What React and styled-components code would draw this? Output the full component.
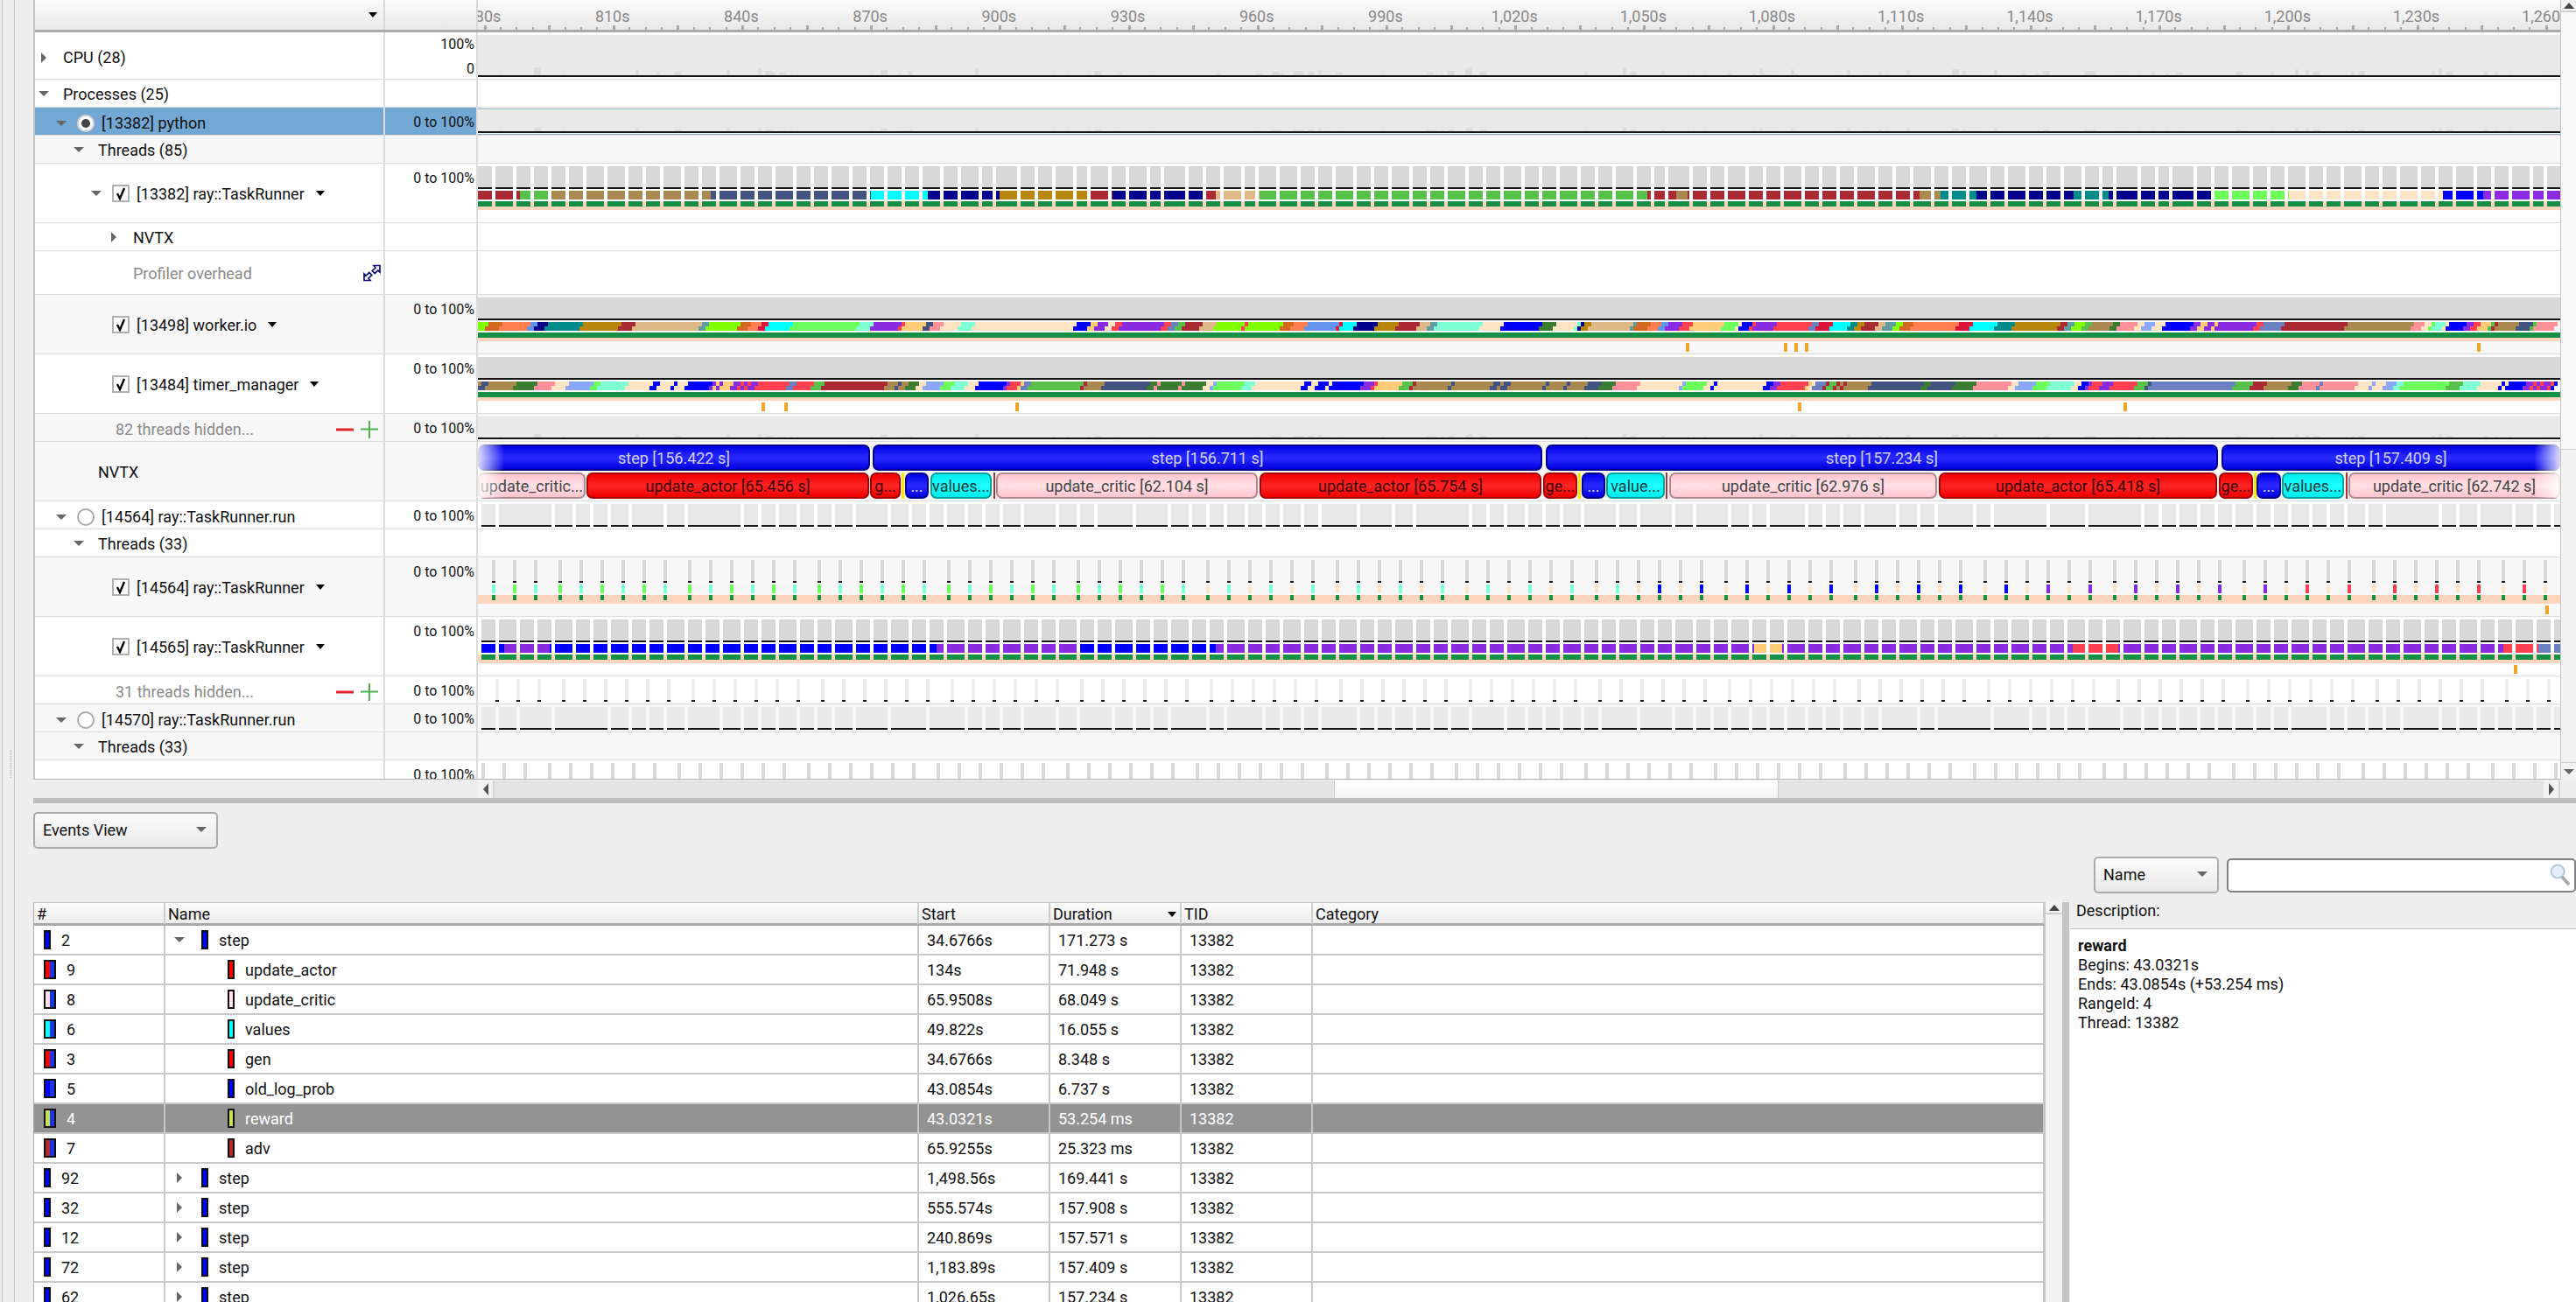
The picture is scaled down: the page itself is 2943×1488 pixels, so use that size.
import React from 'react';
import styled, { createGlobalStyle } from 'styled-components';

const GRAPH_W = 2379;
const ORIGIN = 546;

const GlobalStyle = createGlobalStyle`
    html, body {
        margin: 0;
        padding: 0;
        background: #eeeeee;
    }
    body {
        font-family: Roboto, "Liberation Sans", sans-serif;
        font-size: 18px;
        color: #111;
    }
    * {
        box-sizing: border-box;
    }
`

const COLORS = {
    ch: '#7fff00', ck: '#d2691e', co: '#ff7f50', cf: '#6495ed', nv: '#00008b', te: '#008b8b',
    go: '#b8860b', fb: '#aa2a33', bw: '#deb887', ca: '#5f9ea0', cr: '#dc143c', cy: '#00ffff',
    li: '#6aff5a', aq: '#7fffd4', pu: '#8a2be2', rd: '#ff4050', pe: '#ffcc77', pk: '#ff8f98',
    bi: '#ffe4c4', bl: '#0000ff', sb: '#6a80c0', gr: '#57c14a', dg: '#3a7d30', ta: '#a98950',
    sl: '#445480', lb: '#8aa8f8',
}

// thread colour runs, read off the reference: "colour:endX" in crop coordinates
const WORKER_A = 'ch:24 ck:44 co:85 cf:97 nv:112 te:165 go:222 fb:243 bw:342 ca:353 ch:400 ck:416 co:431 cr:441 cy:478 li:578 aq:598 pu:640 rd:645 pe:677 sl:687 pk:703 bi:729 aq:750 bi:902 bl:925 pe:933 pu:949 bi:959 rd:970 pu:1032 rd:1043 sb:1053 gr:1064 fb:1090 bw:1111 ch:1152 rd:1158 ch:1210 ck:1226 co:1248 cf:1294 cr:1300 cy:1320 nv:1351 go:1382 fb:1414 bw:1429 ca:1440 aq:1508 bi:1539 bl:1568'
const WORKER_B = 'bl:30 dg:50 bi:81 aq:86 nv:92 go:102 bw:164 ca:169 ck:190 co:205 cf:216 pu:237 rd:253 pe:300 li:321 bi:326 bl:341 rd:347 pu:378 rd:430 sb:441 cr:461 cy:487 te:498 go:508 fb:529 bw:540 ca:555 ch:565 ck:581 co:649 cr:670 cy:706 te:733 go:800 fb:811 ca:821 ch:837 gr:847 ta:878 dg:889 pk:915 bi:925 lb:941 bi:957 bl:998 pu:1009 pe:1019 pu:1030 pe:1035 pu:1092 rd:1103 sb:1134 fb:1228 ta:1327 pk:1343 bi:1353 li:1358 aq:1374 bi:1379 bl:1405 pu:1416 rd:1426 pe:1442 gr:1447 fb:1452 ta:1483 sl:1504 gr:1509 pk:1541'
const TIMER_A = 'ta:14 sl:24 ta:65 dg:97 pk:123 bi:144 lb:159 lb:180 li:191 aq:233 bi:269 bl:280 bi:301 bl:306 bi:321 bl:358 pu:363 pe:368 pu:374 pe:389 pu:400 rd:405 pu:410 rd:416 pu:426 rd:473 sb:484 rd:510 gr:525 fb:619 ta:635 sl:640 ta:651 dg:666 bi:677 lb:703 li:719 aq:740 bi:755 bl:797 pu:802 rd:818 pe:823 sb:834 gr:912 fb:917 ta:943 sl:1011 dg:1022 pk:1027 dg:1058 pk:1064 dg:1095 bi:1105 lb:1111 li:1152 aq:1168 bi:1241 bl:1252 bi:1262 bl:1278 bi:1283 bl:1330 pu:1346 rd:1351 pe:1388 gr:1403 fb:1408 ta:1460 sl:1466 ta:1524 sl:1534 ta:1539 sl:1550 ta:1568'
const TIMER_B = 'ta:34 sl:39 ta:65 sl:70 ta:96 sl:117 dg:138 pk:175 bi:237 lb:243 li:274 bi:284 bl:289 bi:362 bl:373 pu:383 rd:425 pe:430 bi:435 sb:451 fb:456 gr:467 fb:472 ta:477 fb:482 ta:519 sl:597 dg:607 sl:644 dg:675 pk:727 bi:738 lb:764 li:785 aq:821 bi:831 bl:842 pu:847 rd:863 pu:878 rd:915 gr:931 sl:936 sb:1061 gr:1087 fb:1108 ta:1144 dg:1160 pk:1186 sb:1191 pk:1243 bi:1264 lb:1270 bi:1285 lb:1301 aq:1311 li:1379 gr:1400 aq:1426 bi:1457 bl:1462 bi:1467 bl:1494 pu:1504 rd:1510 pu:1516 rd:1522 pu:1528 rd:1534 bl:1541'

const snap = (v) => Math.round(v / 4) * 4

const parseRuns = (text, toX, start) => {
    let last = start
    return text.split(' ').map((part) => {
        const [key, end] = part.split(':')
        const next = snap(toX(Number(end)))
        const run = [last, next, COLORS[key]]
        last = next
        return run
    })
}

const leftCrop = (v) => 540 + v / 1.3067 - ORIGIN
const rightCrop = (v) => 1740 + v / 1.3034 - ORIGIN

const bothCrops = (a, b) => {
    const first = parseRuns(a, leftCrop, 0)
    return first.concat(parseRuns(b, rightCrop, first[first.length - 1][1]))
}

const WORKER_RUNS = bothCrops(WORKER_A, WORKER_B)
const TIMER_RUNS = bothCrops(TIMER_A, TIMER_B)

const abs = (x) => x - ORIGIN

const MAIN_RUNS = [
    [0, abs(594), COLORS.fb], [abs(594), abs(628), COLORS.gr], [abs(628), abs(812), COLORS.ta],
    [abs(812), abs(995), COLORS.sl], [abs(995), abs(1060), COLORS.cy], [abs(1060), abs(1142), COLORS.nv],
    [abs(1142), abs(1244), COLORS.go], [abs(1244), abs(1271), COLORS.fb], [abs(1271), abs(1374), COLORS.nv],
    [abs(1374), abs(1389), COLORS.fb], [abs(1389), abs(1439), COLORS.bw], [abs(1439), abs(1882), COLORS.gr],
    [abs(1882), abs(1915), COLORS.fb], [abs(1915), abs(1928), COLORS.ta], [abs(1928), abs(2193), COLORS.fb],
    [abs(2193), abs(2217), COLORS.ta], [abs(2217), abs(2258), COLORS.te], [abs(2258), abs(2369), COLORS.nv],
    [abs(2369), abs(2409), COLORS.te], [abs(2409), abs(2530), COLORS.nv], [abs(2530), abs(2615), COLORS.li],
    [abs(2615), abs(2791), COLORS.bi], [abs(2791), abs(2837), COLORS.bl], [abs(2837), GRAPH_W, COLORS.pu],
]

const RUNNER_RUNS = [
    [0, abs(576), COLORS.bl], [abs(576), abs(628), COLORS.pu], [abs(628), abs(1070), COLORS.bl],
    [abs(1070), abs(1234), COLORS.pu], [abs(1234), abs(1389), COLORS.bl], [abs(1389), abs(2004), COLORS.pu],
    [abs(2004), abs(2036), COLORS.pe], [abs(2036), abs(2368), COLORS.pu], [abs(2368), abs(2420), COLORS.rd],
    [abs(2420), abs(2860), COLORS.pu], [abs(2860), abs(2900), COLORS.rd], [abs(2900), GRAPH_W, COLORS.sb],
]

const random = (seed) => {
    let s = seed
    return () => {
        s = (s * 1664525 + 1013904223) % 4294967296
        return s / 4294967296
    }
}

// active windows of a thread, on the profiler's 4px grid
const makeBlocks = (offset, seed, mergeChance = 0, jitter = 0) => {
    const rnd = random(seed)
    const blocks = []
    let i = 0
    let x = offset
    while (x < GRAPH_W) {
        let end = snap(offset + (i + 1) * 21.33)
        if (jitter && rnd() < jitter) end -= 4
        while (rnd() < mergeChance) {
            i += 1
            end = snap(offset + (i + 1) * 21.33)
        }
        blocks.push([x, Math.min(end - 4, GRAPH_W) - x])
        x = end
        i += 1
    }
    return blocks
}

const makeTicks = (offset) => {
    const ticks = []
    for (let i = 0; offset + i * 24.67 < GRAPH_W; i++) ticks.push(snap(offset + i * 24.67))
    return ticks
}

const makeBumps = (seed) => {
    const rnd = random(seed)
    const bumps = []
    for (let i = 0; i < 130; i++) {
        const v = rnd()
        bumps.push([snap(rnd() * GRAPH_W), rnd() < 0.3 ? 8 : 4, v * v])
    }
    return bumps
}

const BUMPS = makeBumps(11)

const Page = styled.div`
    display: flex;
    width: 2943px;
    height: 1488px;
    overflow: hidden;
    background: #eeeeee;
`

const Rail = styled.div`
    position: relative;
    flex: 0 0 38px;
    background:
        linear-gradient(#c4c4c4, #c4c4c4) 2px 0 / 1px 100% no-repeat,
        linear-gradient(#c4c4c4, #c4c4c4) 16px 0 / 1px 100% no-repeat,
        #eeeeee;
`

const RailGrip = styled.div`
    position: absolute;
    left: 12px;
    top: 857px;
    height: 32px;
    border-left: 1px dotted #aaaaaa;
`

const Main = styled.div`
    flex: 1;
    min-width: 0;
    display: flex;
    flex-direction: column;
`

const Timeline = styled.div`
    display: flex;
    height: 891px;
    flex: none;
    background: #ffffff;
`

const Tree = styled.div`
    flex: 1;
    min-width: 0;
    overflow: hidden;
    border-left: 2px solid #c4c4c4;
    border-bottom: 1px solid #b4b4b4;
`

const HeaderRow = styled.div`
    display: grid;
    grid-template-columns: 400px 106px 1fr;
    height: 37px;
    background: linear-gradient(#fbfbfb, #e8e8e8);
    border-bottom: 3px solid #aaaaaa;
`

const HeaderCell = styled.div`
    display: flex;
    align-items: center;
    justify-content: flex-end;
    padding-right: 7px;
    border-right: 2px solid #d8d8d8;
`

const MiniCaret = styled.span`
    width: 0;
    height: 0;
    border-left: 5px solid transparent;
    border-right: 5px solid transparent;
    border-top: 6px solid #000;
    margin-left: ${(p) => p.$gap || 0}px;
`

const Row = styled.div`
    display: grid;
    grid-template-columns: 400px 106px 1fr;
    height: ${(p) => p.$h || 32}px;
    background: ${(p) => (p.$selected ? '#74a8d4' : p.$tint ? '#f7f7f7' : '#ffffff')};
    border-bottom: 1px solid #dcdcdc;
    overflow: hidden;
`

const LabelCell = styled.div`
    display: flex;
    align-items: center;
    padding: 1px 6px 0 ${(p) => p.$indent || 0}px;
    border-right: 2px solid #dcdcdc;
    color: ${(p) => (p.$muted ? '#8a8a8a' : '#111')};
    white-space: nowrap;
`

const ValueCell = styled.div`
    position: relative;
    padding-right: 2px;
    border-right: 2px solid #dcdcdc;
    font-size: 16px;
    line-height: 34px;
    text-align: right;
    color: #111;
`

const CpuValue = styled.div`
    font-size: 16px;
    line-height: 28px;
    text-align: right;
`

const GraphCell = styled.div`
    overflow: hidden;
    background: ${(p) => (p.$white ? '#ffffff' : 'transparent')};
`

const GraphSvg = styled.svg`
    display: block;
    shape-rendering: crispEdges;
`

const ArrowSlot = styled.span`
    flex: 0 0 ${(p) => p.$w}px;
    display: flex;
    align-items: center;
`

const ArrowDown = styled.span`
    width: 0;
    height: 0;
    border-left: 6px solid transparent;
    border-right: 6px solid transparent;
    border-top: 6px solid #666;
`

const ArrowRight = styled.span`
    width: 0;
    height: 0;
    margin-left: 3px;
    border-top: 6px solid transparent;
    border-bottom: 6px solid transparent;
    border-left: 6px solid #666;
`

const Radio = styled.span`
    flex: none;
    display: flex;
    align-items: center;
    justify-content: center;
    width: 20px;
    height: 20px;
    margin-right: 8px;
    border-radius: 50%;
    border: 2px solid ${(p) => (p.$on ? '#d4d4d4' : '#aaaaaa')};
    background: #ffffff;
    &::after {
        content: '';
        display: ${(p) => (p.$on ? 'block' : 'none')};
        width: 10px;
        height: 10px;
        border-radius: 50%;
        background: #444;
    }
`

const CheckBox = styled.span`
    flex: none;
    display: flex;
    align-items: center;
    justify-content: center;
    width: 20px;
    height: 20px;
    margin-right: 8px;
    border: 2px solid #b0b0b0;
    background: #ffffff;
`

const RowTools = styled.span`
    display: flex;
    align-items: center;
    gap: 8px;
    margin-left: auto;
    margin-right: ${(p) => p.$nudge || 0}px;
`

const GanttCell = styled.div`
    position: relative;
    display: flex;
    flex-direction: column;
    gap: 2px;
    padding-top: 3px;
    overflow: hidden;
    &::before, &::after {
        content: '';
        position: absolute;
        top: 3px;
        bottom: 3px;
        width: 30px;
        z-index: 1;
    }
    &::before {
        left: 0;
        background: linear-gradient(to right, rgba(255, 255, 255, 0.85), rgba(255, 255, 255, 0));
    }
    &::after {
        right: 0;
        background: linear-gradient(to left, rgba(255, 255, 255, 0.85), rgba(255, 255, 255, 0));
    }
`

const GanttRow = styled.div`
    display: flex;
    height: 30px;
`

const BAR_STYLES = {
    step: 'background: linear-gradient(#0000e8, #2a2aff 50%, #0000e0); border-color: #00008e; color: #d0d0ff;',
    actor: 'background: linear-gradient(#f00000, #ff2626 50%, #ee0000); border-color: #a80000; color: #3a0000;',
    critic: 'background: linear-gradient(#ffc4ce, #ffe0e5 50%, #ffc4ce); border-color: #b08a90; color: #444;',
    blue: 'background: linear-gradient(#0000e8, #2a2aff 50%, #0000e0); border-color: #00008e; color: #e0e0ff;',
    cyan: 'background: linear-gradient(#00ecec, #1cffff 50%, #00ecec); border-color: #00a0a0; color: #003a3a;',
    yellow: 'background: #ffe600;',
    brown: 'background: #b03030;',
}

const GanttBar = styled.div`
    flex: none;
    display: flex;
    align-items: center;
    justify-content: center;
    overflow: hidden;
    border: ${(p) => (p.$thin ? 0 : 2)}px solid;
    border-radius: ${(p) => (p.$thin ? 0 : 7)}px;
    white-space: nowrap;
    ${(p) => BAR_STYLES[p.$kind]}
`

const VScroll = styled.div`
    flex: 0 0 ${(p) => p.$w}px;
    display: flex;
    flex-direction: column;
    align-items: stretch;
    background: #f2f2f2;
    border-left: 1px solid #c4c4c4;
`

const VButton = styled.div`
    flex: 0 0 14px;
    display: flex;
    align-items: center;
    justify-content: center;
    border-bottom: 2px solid #cfcfcf;
`

const VThumb = styled.div`
    flex: 0 0 ${(p) => p.$h}px;
    background: #f8f8f8;
    border-bottom: 1px solid #cfcfcf;
`

const VTrack = styled.div`
    flex: 1;
`

const VButtonEnd = styled(VButton)`
    flex-basis: 20px;
    border-bottom: 0;
    border-top: 1px solid #cfcfcf;
`

const ArrowUp = styled.span`
    width: 0;
    height: 0;
    border-left: 6px solid transparent;
    border-right: 6px solid transparent;
    border-bottom: 7px solid #444;
`

const HScroll = styled.div`
    display: flex;
    flex: none;
    height: 20px;
    margin-top: 1px;
    margin-left: 508px;
    width: 2379px;
    background: #e4e4e4;
`

const HButton = styled.div`
    flex: 0 0 19px;
    display: flex;
    align-items: center;
    justify-content: center;
    background: #f2f2f2;
    border-right: 2px solid #d4d4d4;
`

const HTrack = styled.div`
    flex: 0 0 ${(p) => p.$w}px;
`

const HThumb = styled.div`
    flex: 0 0 508px;
    background: linear-gradient(#ffffff, #f2f2f2);
    border-left: 1px solid #c8c8c8;
    border-right: 1px solid #c8c8c8;
`

const HGrow = styled.div`
    flex: 1;
`

const ArrowLeft = styled.span`
    width: 0;
    height: 0;
    border-top: 7px solid transparent;
    border-bottom: 7px solid transparent;
    border-right: 6px solid #555;
`

const ArrowRightDark = styled.span`
    width: 0;
    height: 0;
    border-top: 7px solid transparent;
    border-bottom: 7px solid transparent;
    border-left: 6px solid #555;
`

const Splitter = styled.div`
    flex: none;
    height: 6px;
    background: #bdbdbd;
`

const BottomPane = styled.div`
    flex: 1;
    min-height: 0;
    display: flex;
    flex-direction: column;
    padding-top: 10px;
`

const Combo = styled.div`
    flex: none;
    display: flex;
    align-items: center;
    justify-content: space-between;
    width: ${(p) => p.$w}px;
    height: 42px;
    padding: 0 11px 2px 9px;
    border: 2px solid #aaaaaa;
    border-radius: 5px;
    background: linear-gradient(#fbfbfb, #e9e9e9);
`

const FilterBar = styled.div`
    display: flex;
    flex: none;
    justify-content: flex-end;
    align-items: center;
    gap: 9px;
    margin-top: 9px;
    height: 42px;
`

const SearchBox = styled.div`
    flex: none;
    display: flex;
    align-items: center;
    justify-content: flex-end;
    width: 399px;
    height: 39px;
    padding-right: 4px;
    background: #ffffff;
    border: 2px solid #808080;
    border-radius: 5px;
`

const SplitRow = styled.div`
    flex: 1;
    min-height: 0;
    display: flex;
    margin-top: 10px;
`

const EventTable = styled.div`
    flex: 0 0 2298px;
    overflow: hidden;
    background: #ffffff;
    border-left: 1px solid #aaaaaa;
    border-top: 1px solid #c8c8c8;
`

const TABLE_COLUMNS = '150px 861px 150px 150px 150px 1fr'

const TableHead = styled.div`
    display: grid;
    grid-template-columns: ${TABLE_COLUMNS};
    height: 26px;
    background: linear-gradient(#fbfbfb, #ececec);
    border-bottom: 3px solid #aaaaaa;
    line-height: 22px;
`

const HeadCell = styled.div`
    display: flex;
    align-items: center;
    justify-content: space-between;
    padding: 2px 4px 0 3px;
    border-right: 2px solid #cccccc;
`

const TableRow = styled.div`
    display: grid;
    grid-template-columns: ${TABLE_COLUMNS};
    height: 34px;
    background: ${(p) => (p.$selected ? '#939393' : '#ffffff')};
    color: ${(p) => (p.$selected ? '#ffffff' : '#111')};
`

const Cell = styled.div`
    display: flex;
    align-items: center;
    padding-left: ${(p) => p.$pad || 9}px;
    border-right: 2px solid #c8c8c8;
    border-bottom: 2px solid #c8c8c8;
    white-space: nowrap;
`

const Swatch = styled.span`
    flex: none;
    display: flex;
    width: ${(p) => (p.$double ? 14 : 8)}px;
    height: 22px;
    margin-right: 12px;
    border: 2px solid #101010;
    background: ${(p) => p.$color};
`

const SwatchPart = styled.span`
    flex: 1;
    background: ${(p) => p.$color};
`

const NameArrow = styled.span`
    flex: 0 0 31px;
    display: flex;
    align-items: center;
`

const DescColumn = styled.div`
    flex: 1;
    min-width: 0;
    display: flex;
    flex-direction: column;
`

const DescTitle = styled.div`
    flex: none;
    height: 30px;
    padding-left: 7px;
    line-height: 20px;
`

const DescBody = styled.div`
    flex: 1;
    padding: 8px 9px;
    background: #ffffff;
    border-top: 1px solid #bfbfbf;
    line-height: 22px;
`

const TableSash = styled.div`
    flex: 0 0 9px;
    background: #c4c4c4;
    border-right: 1px solid #eeeeee;
`

const Bold = styled.div`
    font-weight: 700;
`

const Axis = () => {
    const ticks = []
    for (let i = 0; i < 131; i++) ticks.push(6.5 + i * 18.4)
    const labels = []
    for (let i = 0; i < 17; i++) {
        const sec = 780 + i * 30
        labels.push({ x: 6.5 + i * 147.2, text: sec.toLocaleString('en-US') + 's' })
    }
    return (
        <GraphSvg width={GRAPH_W} height={34}>
            {ticks.map((x, i) => (
                <rect key={i} x={Math.round(x)} y={i % 4 === 0 ? 29 : 31} width={i % 4 === 0 ? 3 : 2} height={i % 4 === 0 ? 5 : 3} fill="#a8a8a8" />
            ))}
            {labels.map((l) => (
                <text key={l.text} x={l.x} y={25} textAnchor="middle" fontSize="18" fill="#888888" style={{ shapeRendering: 'auto' }}>{l.text}</text>
            ))}
        </GraphSvg>
    )
}

const Bumps = ({ base, scale }) => BUMPS.map(([x, w, v], i) => {
    const h = Math.max(1, Math.round(v * scale))
    return <rect key={i} x={x} y={base - h} width={w} height={h} fill="#dddddd" />
})

const CpuGraph = () => (
    <GraphSvg width={GRAPH_W} height={53}>
        <rect x="0" y="3" width={GRAPH_W} height="46" fill="#e9e9e9" />
        <Bumps base={49} scale={9} />
        <rect x="0" y="49" width={GRAPH_W} height="2" fill="#151515" />
    </GraphSvg>
)

const SummaryGraph = ({ selected }) => (
    <GraphSvg width={GRAPH_W} height={31}>
        {selected && <rect x="0" y="1" width={GRAPH_W} height="1" fill="#7cabd6" />}
        {selected && <rect x="0" y="30" width={GRAPH_W} height="1" fill="#7cabd6" />}
        <rect x="0" y="3" width={GRAPH_W} height="24" fill="#e9e9e9" />
        <Bumps base={27} scale={4} />
        <rect x="0" y="27" width={GRAPH_W} height="2" fill="#151515" />
    </GraphSvg>
)

const BlockGraph = ({ offset, seed }) => (
    <GraphSvg width={GRAPH_W} height={31}>
        {makeBlocks(offset, seed, 0.22).map(([x, w]) => (
            <g key={x}>
                <rect x={x} y="3" width={w} height="24" fill="#e9e9e9" />
                <rect x={x} y="27" width={w} height="2" fill="#151515" />
            </g>
        ))}
    </GraphSvg>
)

const PulseGraph = ({ offset }) => (
    <GraphSvg width={GRAPH_W} height={31}>
        {makeTicks(offset).map((x) => (
            <g key={x}>
                <rect x={x} y="3" width="4" height="24" fill="#ececec" />
                <rect x={x} y="27" width="4" height="2" fill="#151515" />
            </g>
        ))}
    </GraphSvg>
)

const clipRuns = (runs, x, w) => runs
    .filter(([a, b]) => b > x && a < x + w)
    .map(([a, b, c]) => [Math.max(a, x), Math.min(b, x + w), c])

const ThreadGraph = ({ blocks, runs, mark }) => (
    <GraphSvg width={GRAPH_W} height={67}>
        <rect x="0" y="43" width={GRAPH_W} height="10" fill="#fcd5bb" />
        {blocks.map(([x, w]) => (
            <g key={x}>
                <rect x={x} y="3" width={w} height="24" fill="#d8d8d8" />
                <rect x={x} y="27" width={w} height="2" fill="#151515" />
                {clipRuns(runs, x, w).map(([a, b, c]) => (
                    <rect key={a} x={a} y="31" width={b - a} height="10" fill={c} />
                ))}
                <rect x={x} y="43" width={w} height="6" fill="#148f45" />
            </g>
        ))}
        {mark && <rect x={mark - ORIGIN} y="55" width="4" height="10" fill="#f0a428" />}
    </GraphSvg>
)

const STRIP_MARKS = {
    worker: [1926, 2038, 2050, 2062, 2830],
    timer: [870, 896, 1160, 2054, 2426],
}

const StripGraph = ({ runs, marks }) => (
    <GraphSvg width={GRAPH_W} height={67}>
        <rect x="0" y="3" width={GRAPH_W} height="24" fill="#d8d8d8" />
        <rect x="0" y="27" width={GRAPH_W} height="2" fill="#151515" />
        {runs.map(([a, b, c]) => (
            <g key={a}>
                <rect x={a} y="31" width={b - a} height="5" fill={c} />
                <rect x={Math.max(0, a - 4)} y="36" width={b - a} height="5" fill={c} />
            </g>
        ))}
        <rect x="0" y="43" width={GRAPH_W} height="10" fill="#fcd5bb" />
        <rect x="0" y="43" width={GRAPH_W} height="6" fill="#148f45" />
        {marks.map((m) => (
            <rect key={m} x={m - ORIGIN} y="55" width="4" height="10" fill="#f0a428" />
        ))}
    </GraphSvg>
)

const tickColor = (x, i) => {
    const px = x + ORIGIN
    const odd = i % 2 === 1
    if (px < 1340) return odd ? COLORS.li : COLORS.aq
    if (px < 1880) return odd ? COLORS.bi : COLORS.aq
    if (px < 2320) return odd ? COLORS.bi : COLORS.bl
    if (px < 2590) return odd ? COLORS.bi : COLORS.pu
    return odd ? COLORS.bi : COLORS.rd
}

const TickThread = ({ offset }) => (
    <GraphSvg width={GRAPH_W} height={67}>
        <rect x="0" y="43" width={GRAPH_W} height="10" fill="#fcd5bb" />
        {makeTicks(offset).map((x, i) => (
            <g key={x}>
                <rect x={x} y="3" width="4" height="24" fill="#d8d8d8" />
                <rect x={x} y="27" width="4" height="2" fill="#151515" />
                <rect x={x} y="31" width="4" height="10" fill={tickColor(x, i)} />
                <rect x={x} y="43" width="4" height="6" fill="#148f45" />
            </g>
        ))}
        <rect x={2908 - ORIGIN} y="55" width="4" height="10" fill="#f0a428" />
    </GraphSvg>
)

const LastGraph = () => (
    <GraphSvg width={GRAPH_W} height={31}>
        {makeTicks(4).map((x) => (
            <rect key={x} x={x} y="3" width="4" height="28" fill="#d8d8d8" />
        ))}
    </GraphSvg>
)

const CheckMark = () => (
    <svg width="12" height="16" viewBox="0 0 12 16">
        <path d="M2 8 L5 14 L10 2" fill="none" stroke="#000" strokeWidth="2.4" />
    </svg>
)

const OverheadIcon = () => (
    <svg width="20" height="20" viewBox="0 0 20 20">
        <g fill="none" stroke="#0c0c80" strokeWidth="1.7">
            <path d="M12 1.5 H19 V9 L16.8 7 L13.2 10.6 L10.2 7.6 L14 4 Z" />
            <path d="M8 18.5 H1 V11 L3.2 13 L6.8 9.4 L9.8 12.4 L6 16 Z" />
        </g>
    </svg>
)

const HiddenTools = () => (
    <RowTools>
        <svg width="20" height="4" viewBox="0 0 20 4"><rect width="20" height="3" y="0.5" fill="#e0242a" /></svg>
        <svg width="20" height="20" viewBox="0 0 20 20">
            <rect x="0" y="8.5" width="20" height="2" fill="#4caf50" />
            <rect x="9" y="0" width="2" height="20" fill="#4caf50" />
        </svg>
    </RowTools>
)

const Magnifier = () => (
    <svg width="24" height="28" viewBox="0 0 24 28">
        <circle cx="9" cy="10" r="7.5" fill="#e4eef8" stroke="#b4c8dc" strokeWidth="2" />
        <path d="M14 16 L22 25" stroke="#a8a8a8" strokeWidth="3.5" />
    </svg>
)

const Label = ({ indent, arrow, slot, radio, check, caret, muted, children, tools }) => (
    <LabelCell $indent={indent} $muted={muted}>
        {slot !== undefined && (
            <ArrowSlot $w={slot}>
                {arrow === 'down' && <ArrowDown />}
                {arrow === 'right' && <ArrowRight />}
            </ArrowSlot>
        )}
        {radio !== undefined && <Radio $on={radio} />}
        {check && <CheckBox><CheckMark /></CheckBox>}
        {children}
        {caret && <MiniCaret $gap={caret} />}
        {tools}
    </LabelCell>
)

const STEPS = [
    [546, 994, 'step [156.422 s]'],
    [997, 1762, 'step [156.711 s]'],
    [1766, 2534, 'step [157.234 s]'],
    [2538, 2925, 'step [157.409 s]'],
].map(([a, b, text]) => [a, b, 'step', text])

const RANGES = [
    [546, 669, 'critic', 'update_critic...'],
    [670, 993, 'actor', 'update_actor [65.456 s]'],
    [994, 1029, 'actor', 'g...'],
    [1030, 1033, 'yellow', ''],
    [1034, 1061, 'blue', '...'],
    [1063, 1133, 'cyan', 'values...'],
    [1135, 1137, 'brown', ''],
    [1138, 1437, 'critic', 'update_critic [62.104 s]'],
    [1439, 1761, 'actor', 'update_actor [65.754 s]'],
    [1763, 1802, 'actor', 'ge...'],
    [1803, 1806, 'yellow', ''],
    [1807, 1834, 'blue', '...'],
    [1835, 1902, 'cyan', 'value...'],
    [1903, 1905, 'brown', ''],
    [1907, 2213, 'critic', 'update_critic [62.976 s]'],
    [2215, 2533, 'actor', 'update_actor [65.418 s]'],
    [2535, 2574, 'actor', 'ge...'],
    [2575, 2578, 'yellow', ''],
    [2578, 2606, 'blue', '...'],
    [2607, 2678, 'cyan', 'values...'],
    [2680, 2682, 'brown', ''],
    [2683, 2925, 'critic', 'update_critic [62.742 s]'],
]

const GanttLane = ({ items }) => (
    <GanttRow>
        {items.map(([a, b, kind, text], i) => (
            <GanttBar
                key={a}
                $kind={kind}
                $thin={b - a < 5}
                style={{ width: b - a, marginLeft: a - (i === 0 ? ORIGIN : items[i - 1][1]) }}
            >
                {text}
            </GanttBar>
        ))}
    </GanttRow>
)

const EVENTS = [
    { id: 2, color: '#0000ff', name: 'step', start: '34.6766s', dur: '171.273 s', open: true },
    { id: 9, color: '#ff0000', name: 'update_actor', start: '134s', dur: '71.948 s', child: true },
    { id: 8, color: '#ffe0e6', name: 'update_critic', start: '65.9508s', dur: '68.049 s', child: true },
    { id: 6, color: '#00ffff', name: 'values', start: '49.822s', dur: '16.055 s', child: true },
    { id: 3, color: '#ff0000', name: 'gen', start: '34.6766s', dur: '8.348 s', child: true },
    { id: 5, color: '#0000ff', name: 'old_log_prob', start: '43.0854s', dur: '6.737 s', child: true },
    { id: 4, color: '#c8e050', name: 'reward', start: '43.0321s', dur: '53.254 ms', child: true, selected: true },
    { id: 7, color: '#b02a2a', name: 'adv', start: '65.9255s', dur: '25.323 ms', child: true },
    { id: 92, color: '#0000ff', name: 'step', start: '1,498.56s', dur: '169.441 s' },
    { id: 32, color: '#0000ff', name: 'step', start: '555.574s', dur: '157.908 s' },
    { id: 12, color: '#0000ff', name: 'step', start: '240.869s', dur: '157.571 s' },
    { id: 72, color: '#0000ff', name: 'step', start: '1,183.89s', dur: '157.409 s' },
    { id: 62, color: '#0000ff', name: 'step', start: '1,026.65s', dur: '157.234 s' },
]

const EventRow = ({ event }) => (
    <TableRow $selected={event.selected}>
        <Cell $pad={11}>
            {event.child ? (
                <Swatch $double $color="#0000ff">
                    <SwatchPart $color={event.color} />
                    <SwatchPart $color="#1a34e8" />
                </Swatch>
            ) : (
                <Swatch $color={event.color} />
            )}
            {event.id}
        </Cell>
        <Cell $pad={event.child ? 71 : 10}>
            {!event.child && (
                <NameArrow>{event.open ? <ArrowDown /> : <ArrowRight />}</NameArrow>
            )}
            <Swatch $color={event.color} />
            {event.name}
        </Cell>
        <Cell>{event.start}</Cell>
        <Cell>{event.dur}</Cell>
        <Cell>13382</Cell>
        <Cell />
    </TableRow>
)

const App = () => {
    const mainBlocks = makeBlocks(0, 5, 0, 0.12)
    const runnerBlocks = makeBlocks(4, 9)
    return (
        <Page>
            <GlobalStyle />
            <Rail><RailGrip /></Rail>
            <Main>
                <Timeline>
                    <Tree>
                        <HeaderRow>
                            <HeaderCell><MiniCaret /></HeaderCell>
                            <HeaderCell />
                            <GraphCell><Axis /></GraphCell>
                        </HeaderRow>
                        <Row $h={54}>
                            <Label indent={4} slot={28} arrow="right">CPU (28)</Label>
                            <ValueCell>
                                <CpuValue>100%</CpuValue>
                                <CpuValue>0</CpuValue>
                            </ValueCell>
                            <GraphCell><CpuGraph /></GraphCell>
                        </Row>
                        <Row>
                            <Label indent={4} slot={28} arrow="down">Processes (25)</Label>
                            <ValueCell />
                            <GraphCell />
                        </Row>
                        <Row $selected>
                            <Label indent={24} slot={24} arrow="down" radio>[13382] python</Label>
                            <ValueCell>0 to 100%</ValueCell>
                            <GraphCell $white><SummaryGraph selected /></GraphCell>
                        </Row>
                        <Row $tint>
                            <Label indent={44} slot={28} arrow="down">Threads (85)</Label>
                            <ValueCell />
                            <GraphCell />
                        </Row>
                        <Row $h={68}>
                            <Label indent={64} slot={24} arrow="down" check caret={13}>[13382] ray::TaskRunner</Label>
                            <ValueCell>0 to 100%</ValueCell>
                            <GraphCell><ThreadGraph blocks={mainBlocks} runs={MAIN_RUNS} /></GraphCell>
                        </Row>
                        <Row>
                            <Label indent={84} slot={28} arrow="right">NVTX</Label>
                            <ValueCell />
                            <GraphCell />
                        </Row>
                        <Row $h={50}>
                            <Label indent={112} muted tools={<RowTools $nudge={-3}><OverheadIcon /></RowTools>}>Profiler overhead</Label>
                            <ValueCell />
                            <GraphCell />
                        </Row>
                        <Row $h={68} $tint>
                            <Label indent={64} slot={24} check caret={13}>[13498] worker.io</Label>
                            <ValueCell>0 to 100%</ValueCell>
                            <GraphCell><StripGraph runs={WORKER_RUNS} marks={STRIP_MARKS.worker} /></GraphCell>
                        </Row>
                        <Row $h={68}>
                            <Label indent={64} slot={24} check caret={13}>[13484] timer_manager</Label>
                            <ValueCell>0 to 100%</ValueCell>
                            <GraphCell><StripGraph runs={TIMER_RUNS} marks={STRIP_MARKS.timer} /></GraphCell>
                        </Row>
                        <Row $tint>
                            <Label indent={92} muted tools={<HiddenTools />}>82 threads hidden...</Label>
                            <ValueCell>0 to 100%</ValueCell>
                            <GraphCell><SummaryGraph /></GraphCell>
                        </Row>
                        <Row $h={68} $tint>
                            <Label indent={72}>NVTX</Label>
                            <ValueCell />
                            <GanttCell>
                                <GanttLane items={STEPS} />
                                <GanttLane items={RANGES} />
                            </GanttCell>
                        </Row>
                        <Row>
                            <Label indent={24} slot={24} arrow="down" radio={false}>[14564] ray::TaskRunner.run</Label>
                            <ValueCell>0 to 100%</ValueCell>
                            <GraphCell><BlockGraph offset={4} seed={21} /></GraphCell>
                        </Row>
                        <Row>
                            <Label indent={44} slot={28} arrow="down">Threads (33)</Label>
                            <ValueCell />
                            <GraphCell />
                        </Row>
                        <Row $h={68} $tint>
                            <Label indent={64} slot={24} check caret={13}>[14564] ray::TaskRunner</Label>
                            <ValueCell>0 to 100%</ValueCell>
                            <GraphCell><TickThread offset={16} /></GraphCell>
                        </Row>
                        <Row $h={68}>
                            <Label indent={64} slot={24} check caret={13}>[14565] ray::TaskRunner</Label>
                            <ValueCell>0 to 100%</ValueCell>
                            <GraphCell><ThreadGraph blocks={runnerBlocks} runs={RUNNER_RUNS} mark={2872} /></GraphCell>
                        </Row>
                        <Row>
                            <Label indent={92} muted tools={<HiddenTools />}>31 threads hidden...</Label>
                            <ValueCell>0 to 100%</ValueCell>
                            <GraphCell><PulseGraph offset={20} /></GraphCell>
                        </Row>
                        <Row $tint>
                            <Label indent={24} slot={24} arrow="down" radio={false}>[14570] ray::TaskRunner.run</Label>
                            <ValueCell>0 to 100%</ValueCell>
                            <GraphCell><BlockGraph offset={4} seed={34} /></GraphCell>
                        </Row>
                        <Row $tint>
                            <Label indent={44} slot={28} arrow="down">Threads (33)</Label>
                            <ValueCell />
                            <GraphCell />
                        </Row>
                        <Row>
                            <LabelCell />
                            <ValueCell>0 to 100%</ValueCell>
                            <GraphCell><LastGraph /></GraphCell>
                        </Row>
                    </Tree>
                    <VScroll $w={18}>
                        <VButton><ArrowUp /></VButton>
                        <VThumb $h={500} />
                        <VTrack />
                        <VButtonEnd><ArrowDown /></VButtonEnd>
                    </VScroll>
                </Timeline>
                <HScroll>
                    <HButton><ArrowLeft /></HButton>
                    <HTrack $w={959} />
                    <HThumb />
                    <HGrow />
                    <HButton><ArrowRightDark /></HButton>
                </HScroll>
                <Splitter />
                <BottomPane>
                    <Combo $w={211}>Events View<ArrowDown /></Combo>
                    <FilterBar>
                        <Combo $w={143}>Name<ArrowDown /></Combo>
                        <SearchBox><Magnifier /></SearchBox>
                    </FilterBar>
                    <SplitRow>
                        <EventTable>
                            <TableHead>
                                <HeadCell>#</HeadCell>
                                <HeadCell>Name</HeadCell>
                                <HeadCell>Start</HeadCell>
                                <HeadCell>Duration<MiniCaret /></HeadCell>
                                <HeadCell>TID</HeadCell>
                                <HeadCell>Category</HeadCell>
                            </TableHead>
                            {EVENTS.map((event) => <EventRow key={event.id} event={event} />)}
                        </EventTable>
                        <VScroll $w={20}>
                            <VButton><ArrowUp /></VButton>
                            <VTrack />
                        </VScroll>
                        <TableSash />
                        <DescColumn>
                            <DescTitle>Description:</DescTitle>
                            <DescBody>
                                <Bold>reward</Bold>
                                <div>Begins: 43.0321s</div>
                                <div>Ends: 43.0854s (+53.254 ms)</div>
                                <div>RangeId: 4</div>
                                <div>Thread: 13382</div>
                            </DescBody>
                        </DescColumn>
                    </SplitRow>
                </BottomPane>
            </Main>
        </Page>
    )
}

export default App;
